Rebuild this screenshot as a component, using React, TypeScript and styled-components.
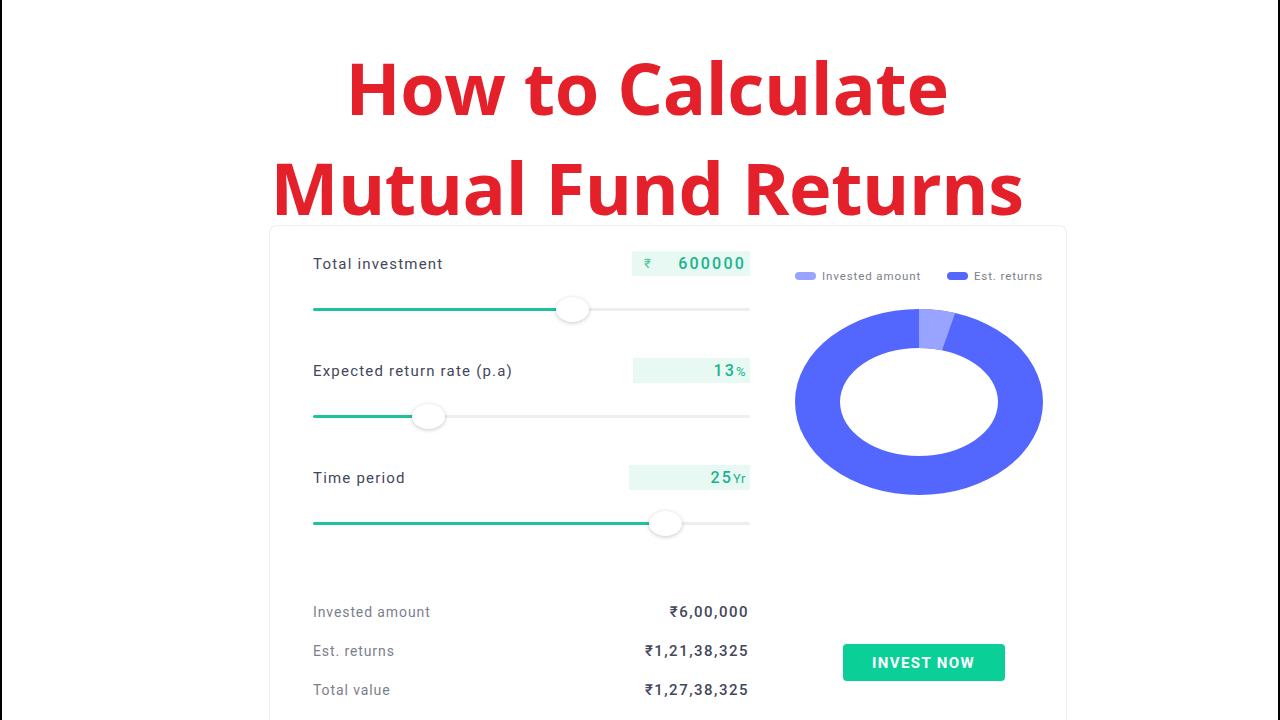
import React from "react";
import styled, { createGlobalStyle } from "styled-components";

const Global = createGlobalStyle`
  html, body { margin: 0; padding: 0; background: #ffffff; }
  body { font-family: Roboto, "Noto Sans", Arial, sans-serif; }
  * { box-sizing: border-box; }
`;

const Page = styled.div`
  width: 1280px;
  height: 720px;
  overflow: hidden;
  background: #ffffff;
  border-left: 2px solid #000;
  border-right: 2px solid #000;
  display: flex;
  flex-direction: column;
`;

const Title = styled.h1`
  margin: 0;
  padding: 37px 0 0 14px;
  height: 225px;
  text-align: center;
  font-family: "Open Sans", "Noto Sans", sans-serif;
  font-weight: 700;
  font-size: 72px;
  line-height: 100px;
  color: #e4202a;
  letter-spacing: -0.4px;
`;

const Card = styled.div`
  margin-left: 267px;
  width: 798px;
  flex: 1;
  border: 1px solid #eeeeee;
  border-bottom: none;
  border-radius: 8px 8px 0 0;
  padding: 25px 0 0 43px;
  display: grid;
  grid-template-columns: 437px 248px;
  column-gap: 45px;
`;

const LeftCol = styled.div`
  display: flex;
  flex-direction: column;
`;

const Section = styled.div`
  height: 107px;
  display: flex;
  flex-direction: column;
`;

const Header = styled.div`
  height: 25px;
  display: flex;
  align-items: center;
  justify-content: space-between;
`;

const Label = styled.span`
  font-size: 15px;
  color: #44475b;
  letter-spacing: 1.2px;
`;

const ValueBox = styled.div<{ $w: number }>`
  width: ${(p) => p.$w}px;
  height: 25px;
  background: #e8f8f3;
  display: flex;
  align-items: center;
  justify-content: space-between;
  padding: 0 4px 0 12px;
  color: #18b48d;
  font-size: 16px;
  font-weight: 500;
  letter-spacing: 2.2px;
`;

const Rupee = styled.span`
  font-size: 13px;
  color: #5fc9a9;
`;

const Right = styled.span`
  margin-left: auto;
`;

const Unit = styled.span`
  font-size: 13px;
  font-weight: 400;
  letter-spacing: 0.5px;
`;

const Track = styled.div`
  position: relative;
  margin-top: 32px;
  height: 3px;
  background: #eeeeee;
  border-radius: 2px;
`;

const Fill = styled.div`
  height: 3px;
  background: #1fc29a;
  border-radius: 2px;
`;

const Thumb = styled.div`
  position: absolute;
  top: -11px;
  width: 33px;
  height: 25px;
  margin-left: -16px;
  border-radius: 50%;
  background: #ffffff;
  box-shadow: 0 1px 4px rgba(0, 0, 0, 0.22);
`;

const Summary = styled.div`
  margin-top: 20px;
  display: flex;
  flex-direction: column;
`;

const SumRow = styled.div`
  height: 39px;
  display: flex;
  align-items: center;
  justify-content: space-between;
  padding-right: 1px;
`;

const SumLabel = styled.span`
  font-size: 14px;
  color: #7c7e8c;
  letter-spacing: 0.9px;
`;

const SumValue = styled.span`
  font-size: 15px;
  font-weight: 500;
  color: #44475b;
  letter-spacing: 1.5px;
`;

const RightCol = styled.div`
  display: flex;
  flex-direction: column;
  align-items: center;
`;

const Legend = styled.div`
  margin-top: 17px;
  width: 100%;
  display: flex;
  align-items: center;
  justify-content: space-between;
  height: 16px;
  white-space: nowrap;
`;

const LegendItem = styled.div`
  display: flex;
  align-items: center;
  gap: 6px;
  font-size: 11.5px;
  color: #7c7e8c;
  letter-spacing: 0.9px;
`;

const Pill = styled.span<{ $c: string }>`
  flex: none;
  width: 21px;
  height: 8px;
  border-radius: 4px;
  background: ${(p) => p.$c};
`;

const Chart = styled.svg`
  margin-top: 25px;
  display: block;
`;

const Button = styled.button`
  margin-top: 149px;
  margin-left: 9px;
  width: 162px;
  height: 37px;
  border: none;
  border-radius: 4px;
  background: #0acf97;
  color: #ffffff;
  font-family: Roboto, Arial, sans-serif;
  font-weight: 700;
  font-size: 15px;
  letter-spacing: 1.4px;
`;

type Slider = { label: string; pct: number; w: number; value: React.ReactNode };

const sliders: Slider[] = [
  {
    label: "Total investment",
    pct: 59.3,
    w: 118,
    value: (
      <>
        <Rupee>₹</Rupee>
        <Right>600000</Right>
      </>
    ),
  },
  {
    label: "Expected return rate (p.a)",
    pct: 26.3,
    w: 117,
    value: (
      <Right>
        13<Unit>%</Unit>
      </Right>
    ),
  },
  {
    label: "Time period",
    pct: 80.5,
    w: 121,
    value: (
      <Right>
        25<Unit>Yr</Unit>
      </Right>
    ),
  },
];

const summary = [
  ["Invested amount", "₹6,00,000"],
  ["Est. returns", "₹1,21,38,325"],
  ["Total value", "₹1,27,38,325"],
];

function Donut() {
  const cx = 124;
  const cy = 93;
  const ro = { x: 124, y: 93 };
  const ri = { x: 79, y: 54 };
  const frac = 600000 / 12738325;
  const t = frac * 2 * Math.PI;
  const pt = (r: { x: number; y: number }, a: number) =>
    `${cx + r.x * Math.sin(a)} ${cy - r.y * Math.cos(a)}`;
  const seg = `M ${pt(ro, 0)} A ${ro.x} ${ro.y} 0 0 1 ${pt(ro, t)} L ${pt(ri, t)} A ${ri.x} ${ri.y} 0 0 0 ${pt(ri, 0)} Z`;
  return (
    <Chart width={248} height={186} viewBox="0 0 248 186">
      <path
        fillRule="evenodd"
        fill="#5367fe"
        d={`M ${cx - ro.x} ${cy} a ${ro.x} ${ro.y} 0 1 0 ${2 * ro.x} 0 a ${ro.x} ${ro.y} 0 1 0 ${-2 * ro.x} 0 Z M ${cx - ri.x} ${cy} a ${ri.x} ${ri.y} 0 1 0 ${2 * ri.x} 0 a ${ri.x} ${ri.y} 0 1 0 ${-2 * ri.x} 0 Z`}
      />
      <path fill="#98a4ff" d={seg} />
    </Chart>
  );
}

export default function App() {
  return (
    <>
      <Global />
      <Page>
        <Title>
          How to Calculate
          <br />
          Mutual Fund Returns
        </Title>
        <Card>
          <LeftCol>
            {sliders.map((s) => (
              <Section key={s.label}>
                <Header>
                  <Label>{s.label}</Label>
                  <ValueBox $w={s.w}>{s.value}</ValueBox>
                </Header>
                <Track>
                  <Fill style={{ width: `${s.pct}%` }} />
                  <Thumb style={{ left: `${s.pct}%` }} />
                </Track>
              </Section>
            ))}
            <Summary>
              {summary.map(([l, v]) => (
                <SumRow key={l}>
                  <SumLabel>{l}</SumLabel>
                  <SumValue>{v}</SumValue>
                </SumRow>
              ))}
            </Summary>
          </LeftCol>
          <RightCol>
            <Legend>
              <LegendItem>
                <Pill $c="#98a4ff" />
                Invested amount
              </LegendItem>
              <LegendItem>
                <Pill $c="#5367fe" />
                Est. returns
              </LegendItem>
            </Legend>
            <Donut />
            <Button>INVEST NOW</Button>
          </RightCol>
        </Card>
      </Page>
    </>
  );
}
